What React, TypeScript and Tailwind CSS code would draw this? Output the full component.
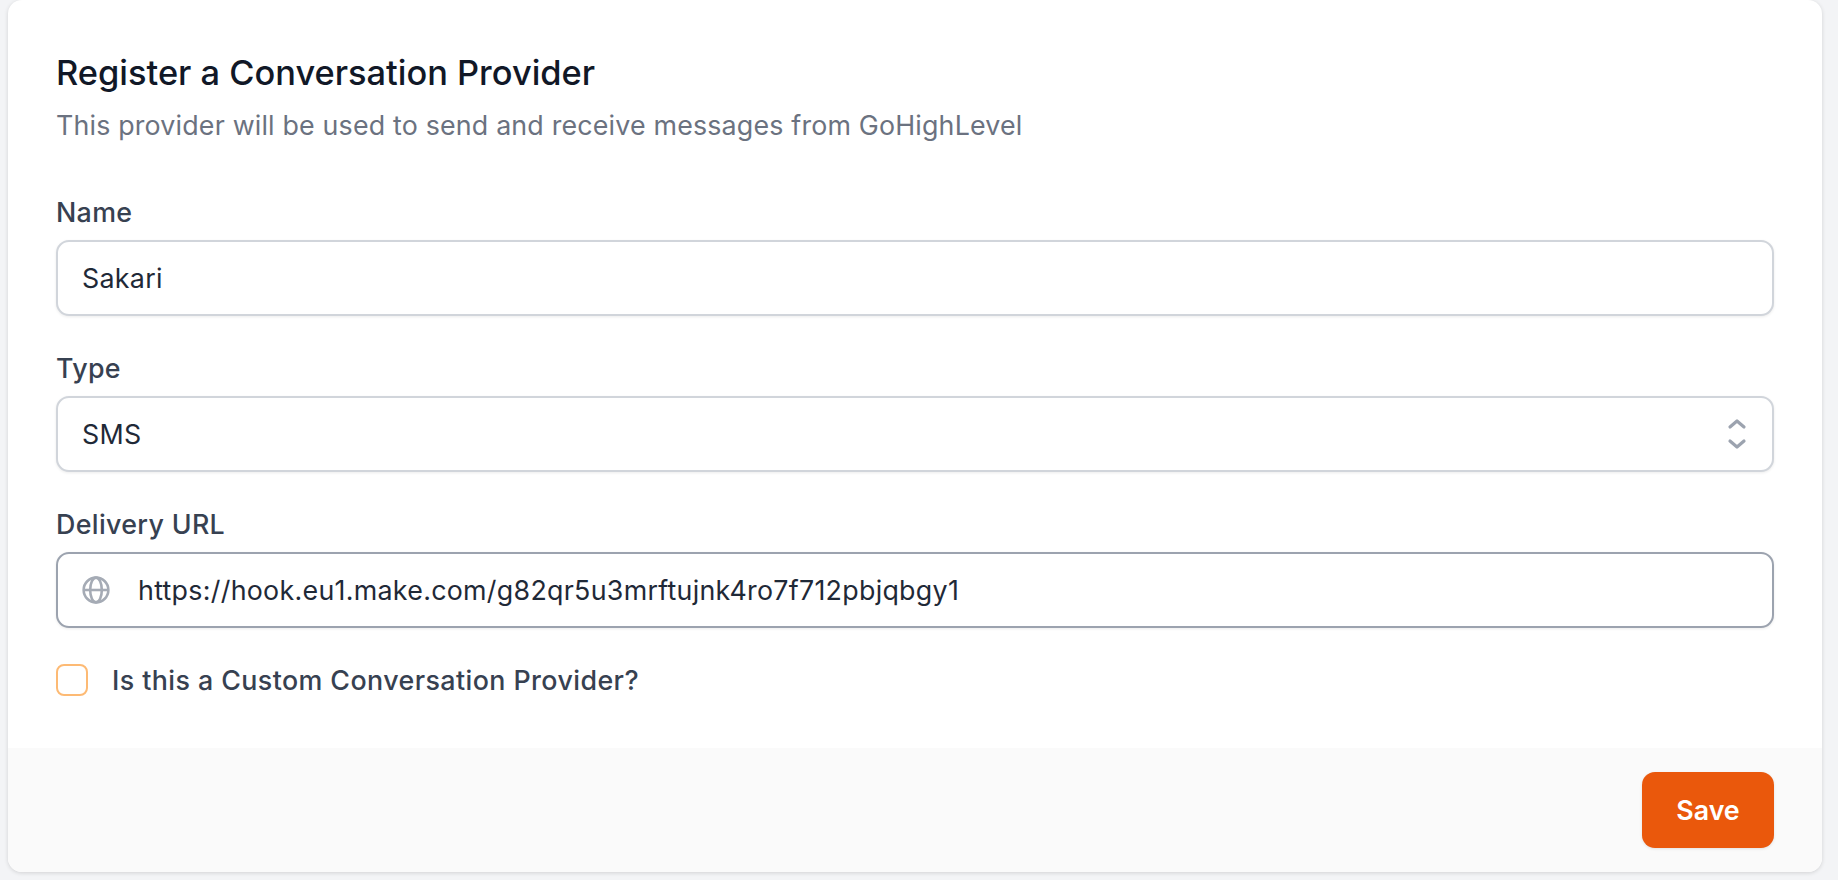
const labelClass = "block text-[26.8px] leading-[36px] tracking-[0.35px] font-medium text-[#374151]";
const boxClass =
  "mt-[10px] flex h-[76px] w-full items-center rounded-[13px] border-2 bg-white text-[26.8px] tracking-[0.29px] text-[#1f2937] shadow-[0_1px_3px_rgba(0,0,0,0.08)]";

function GlobeIcon() {
  return (
    <svg viewBox="0 0 24 24" fill="none" stroke="#a5abb5" strokeWidth="2.2" className="h-[28px] w-[28px] shrink-0">
      <circle cx="12" cy="12" r="10.6" />
      <ellipse cx="12" cy="12" rx="5" ry="10.6" />
      <path d="M2 12h20" />
    </svg>
  );
}

function UpDownIcon() {
  return (
    <svg viewBox="0 0 20 32" fill="none" stroke="#9ca3af" strokeWidth="3.2" strokeLinecap="round" strokeLinejoin="round" className="h-[32px] w-[20px]">
      <path d="M3 9 10 3l7 6" />
      <path d="M3 23 10 29l7-6" />
    </svg>
  );
}

export default function App() {
  return (
    <div className="h-[880px] w-full overflow-hidden bg-[#f3f4f6] px-[8px] pr-[16px] font-['Inter',sans-serif]">
      <div className="flex h-[872px] flex-col overflow-hidden rounded-[14px] bg-white shadow-[0_1px_4px_rgba(0,0,0,0.14)]">
        <div className="flex-1 px-[48px] pt-[51px]">
          <h1 className="text-[34.4px] leading-[44px] font-medium text-[#111827]">Register a Conversation Provider</h1>
          <p className="mt-[12px] text-[26.8px] leading-[36px] tracking-[0.18px] text-[#6b7280]">
            This provider will be used to send and receive messages from GoHighLevel
          </p>

          <label className="mt-[51px] block">
            <span className={labelClass}>Name</span>
            <div className={`${boxClass} border-[#d1d5db] px-[24px]`}>Sakari</div>
          </label>

          <label className="mt-[34px] block">
            <span className={labelClass}>Type</span>
            <div className={`${boxClass} justify-between border-[#d1d5db] pl-[24px] pr-[25px]`}>
              SMS
              <UpDownIcon />
            </div>
          </label>

          <label className="mt-[34px] block">
            <span className={labelClass}>Delivery URL</span>
            <div className={`${boxClass} border-[#9ca3af] pl-[24px]`}>
              <GlobeIcon />
              <span className="ml-[28px]">https://hook.eu1.make.com/g82qr5u3mrftujnk4ro7f712pbjqbgy1</span>
            </div>
          </label>

          <label className="mt-[32px] flex items-center">
            <span className="h-[32px] w-[32px] rounded-[8px] border-2 border-[#fdba74] bg-white" />
            <span className="ml-[24px] text-[26.8px] tracking-[0.43px] font-medium text-[#374151]">Is this a Custom Conversation Provider?</span>
          </label>
        </div>

        <div className="flex h-[124px] items-start justify-end bg-[#fafafa] pr-[48px] pt-[24px]">
          <button className="h-[76px] w-[132px] rounded-[13px] bg-[#ea580c] text-[26.8px] font-semibold text-white shadow-[0_1px_3px_rgba(0,0,0,0.1)]">
            Save
          </button>
        </div>
      </div>
    </div>
  );
}
